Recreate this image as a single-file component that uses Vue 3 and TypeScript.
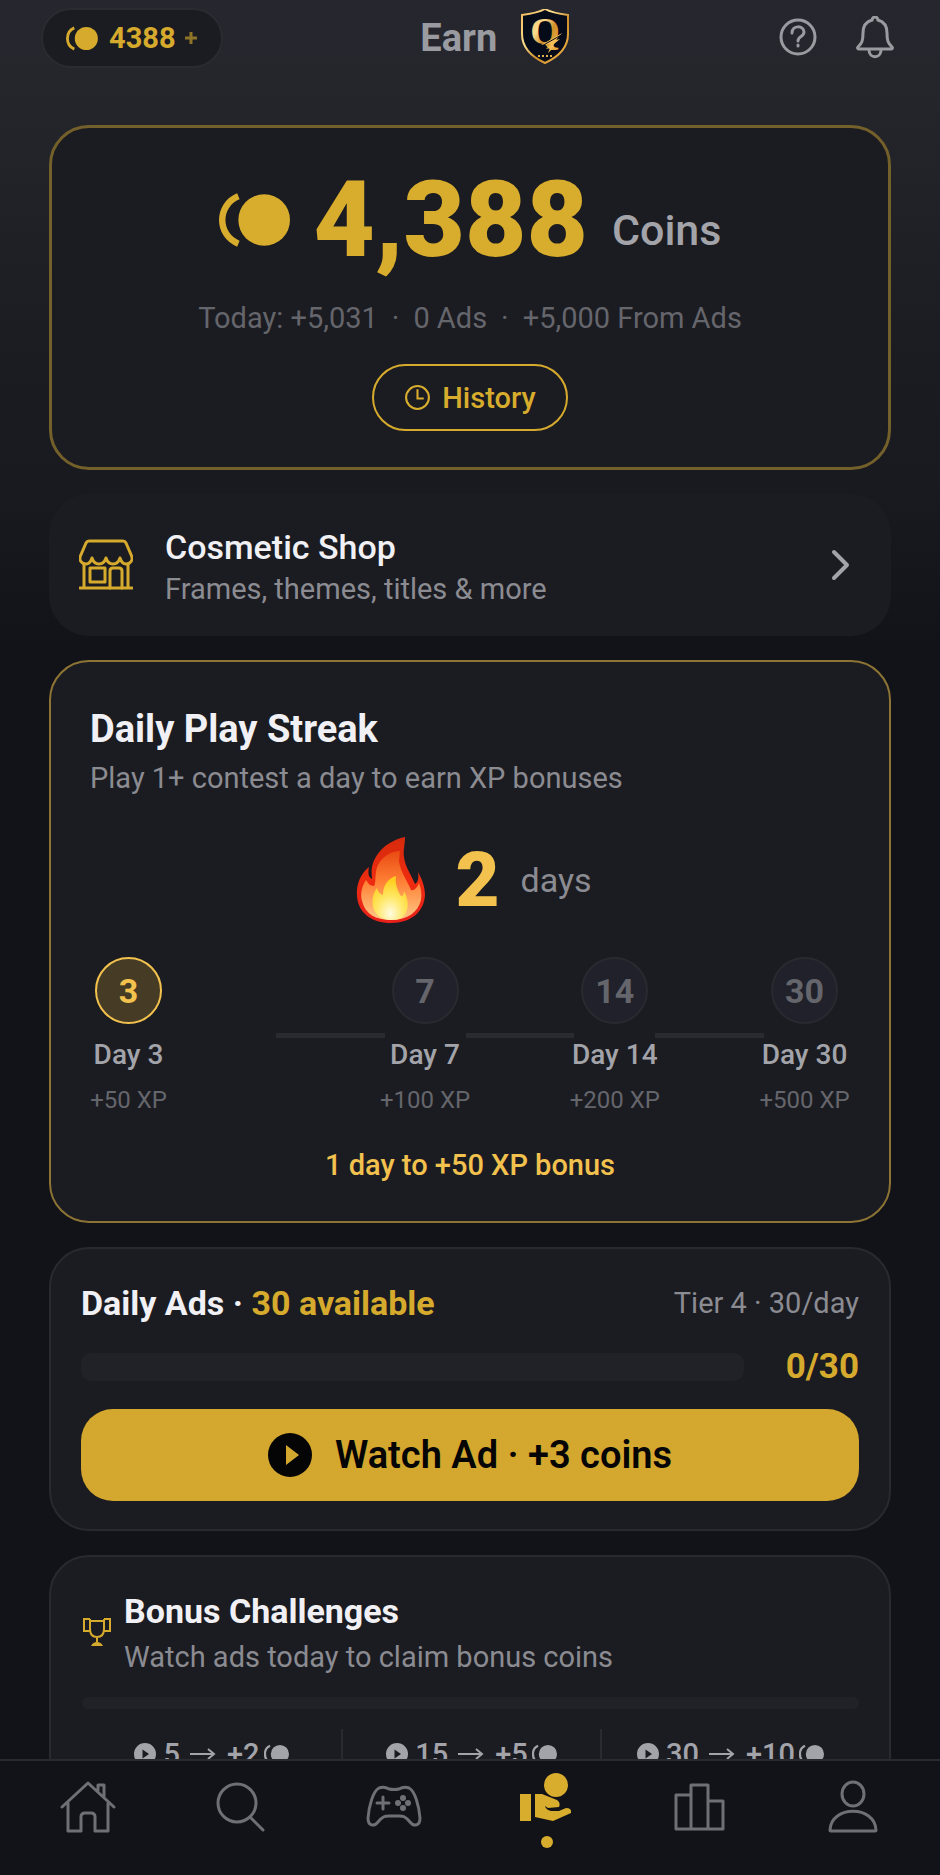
<script setup lang="ts">
interface Step {
  day: number
  xp: number
  active: boolean
}
interface Challenge {
  ads: number
  coins: number
}

const balance = 4388
const adsWatched = 0
const adsLimit = 30
const streak = 2

const steps: Step[] = [
  { day: 3, xp: 50, active: true },
  { day: 7, xp: 100, active: false },
  { day: 14, xp: 200, active: false },
  { day: 30, xp: 500, active: false },
]

const challenges: Challenge[] = [
  { ads: 5, coins: 2 },
  { ads: 15, coins: 5 },
  { ads: 30, coins: 10 },
]
</script>

<template>
  <div class="app">
    <header class="topbar">
      <button class="pill" type="button" aria-label="Coin balance">
        <svg class="pill-coin" viewBox="0 0 66 52" aria-hidden="true">
          <path d="M17 4C-2 12 -2 40 17 48" fill="none" stroke="currentColor" stroke-width="6" />
          <circle cx="42" cy="26" r="24" fill="currentColor" />
        </svg>
        <span>{{ balance }}</span>
        <svg class="pill-plus" viewBox="0 0 14 14" aria-hidden="true">
          <path d="M7 1V13M1 7H13" fill="none" stroke="currentColor" stroke-width="3" />
        </svg>
      </button>

      <div class="brand">
        <h1>Earn</h1>
        <svg class="shield" viewBox="0 2 50 58" aria-hidden="true">
          <defs>
            <linearGradient id="gold" x1="0" y1="0" x2="1" y2="1">
              <stop offset="0" stop-color="#f3b95a" />
              <stop offset="0.35" stop-color="#fbdc8e" />
              <stop offset="0.6" stop-color="#d08f2a" />
              <stop offset="1" stop-color="#f5b94c" />
            </linearGradient>
          </defs>
          <path
            d="M25 2C18 6 10 7 2 8V27C2 41 12 50 25 56C38 50 48 41 48 27V8C40 7 32 6 25 2Z"
            fill="#050b18"
            stroke="url(#gold)"
            stroke-width="2"
          />
          <text x="25" y="37" text-anchor="middle" class="shield-q" fill="url(#gold)">Q</text>
          <path d="M21 38L42 26L36 33L40 32L34 37L33 41L28 46L30 41L26 42L31 37Z" fill="#f4bd58" />
          <path d="M20 40L43 27" stroke="#050b18" stroke-width="1" />
          <path d="M18 49H33" stroke="#e5ac4a" stroke-width="2" stroke-dasharray="2 2" />
        </svg>
      </div>

      <div class="actions">
        <button type="button" aria-label="Help">
          <svg viewBox="0 0 44 44" aria-hidden="true">
            <circle cx="22" cy="21" r="17" />
            <path d="M16 17C16 9 28 9 28 16C28 21 22 20 22 25" />
            <path d="M22 29V30" />
          </svg>
        </button>
        <button type="button" aria-label="Notifications">
          <svg viewBox="0 0 44 44" aria-hidden="true">
            <path
              d="M22 1C20 1 19 3 19 4C12 6 10 11 10 17C10 25 9 27 5 31C4 32 5 33 6 33H38C39 33 40 32 39 31C35 27 34 25 34 17C34 11 32 6 25 4C25 3 24 1 22 1Z"
            />
            <path d="M16 34C16 43 28 43 28 34" />
          </svg>
        </button>
      </div>
    </header>

    <main class="content">
      <section class="card balance">
        <div class="balance-row">
          <svg class="balance-coin" viewBox="0 0 66 52" aria-hidden="true">
            <path d="M18 4C-2 12 -2 40 18 48" fill="none" stroke="currentColor" stroke-width="6" />
            <circle cx="42" cy="26" r="24" fill="currentColor" />
          </svg>
          <strong>{{ balance.toLocaleString('en-US') }}</strong>
          <span class="unit">Coins</span>
        </div>
        <p class="today">
          <span>Today: +5,031</span><span>·</span><span>0 Ads</span><span>·</span><span>+5,000 From Ads</span>
        </p>
        <button class="history" type="button">
          <svg viewBox="0 0 26 26" aria-hidden="true">
            <circle cx="13" cy="13" r="11" />
            <path d="M13 5V14H19" />
          </svg>
          History
        </button>
      </section>

      <a class="card shop" href="#shop">
        <svg class="shop-icon" viewBox="0 0 54 52" aria-hidden="true">
          <path
            d="M10 2H44Q46 2 47 4L53 18V21Q51 25 47 25Q43 25 41 19Q39 25 34 25Q29 25 27 19Q25 25 20 25Q15 25 13 19Q11 25 7 25Q3 25 1 21V18L7 4Q8 2 10 2Z"
          />
          <path d="M5 25V49M49 25V49M1 49H53" />
          <path d="M11 29H26V43H11ZM31 49V32Q31 29 34 29H40Q43 29 43 32V49" />
        </svg>
        <span class="shop-text">
          <span class="shop-title">Cosmetic Shop</span>
          <span class="sub">Frames, themes, titles &amp; more</span>
        </span>
        <svg class="chevron" viewBox="0 0 20 32" aria-hidden="true"><path d="M3 3L16 16L3 29" /></svg>
      </a>

      <section class="card streak">
        <h2>Daily Play Streak</h2>
        <p class="sub">Play 1+ contest a day to earn XP bonuses</p>
        <div class="streak-row">
          <svg class="flame" viewBox="0 0 70 88" aria-hidden="true">
            <defs>
              <linearGradient id="outer" x1="0" y1="0" x2="0" y2="1">
                <stop offset="0" stop-color="#d62a0c" />
                <stop offset="0.5" stop-color="#ee2c10" />
                <stop offset="1" stop-color="#e8201a" />
              </linearGradient>
              <linearGradient id="middle" x1="0" y1="0" x2="0" y2="1">
                <stop offset="0" stop-color="#e94a12" />
                <stop offset="0.45" stop-color="#ff8136" />
                <stop offset="1" stop-color="#ffc987" />
              </linearGradient>
              <radialGradient id="inner" cx="0.5" cy="0.85" r="0.75">
                <stop offset="0" stop-color="#fffbe0" />
                <stop offset="0.5" stop-color="#ffe868" />
                <stop offset="1" stop-color="#ffcf1f" />
              </radialGradient>
            </defs>
            <path
              d="M49 1C31 5 19 17 16 31C15 36 16 40 16 43C12 41 12 36 13 31C5 37 0 48 1 60C2 77 16 87 35 87C55 87 68 76 69 59C69 51 66 43 62 36C63 42 62 46 59 48C55 38 49 31 48 21C47 14 49 9 49 1Z"
              fill="url(#outer)"
            />
            <path
              d="M44 15C35 15 22 22 20 36C19 42 20 47 18 50C14 50 12 47 10 44C6 50 4 58 6 65C9 78 20 84 35 84C52 84 62 76 65 64C66 58 65 52 63 47C61 52 58 55 55 54C52 46 44 35 43 25Z"
              fill="url(#middle)"
            />
            <path
              d="M40 40C31 43 27 50 27 59C24 58 22 56 21 52C16 58 15 68 19 76C23 82 29 84 36 84C43 84 49 81 51 74C53 67 51 61 48 55C48 58 47 60 45 60C41 54 39 47 40 40Z"
              fill="url(#inner)"
            />
          </svg>
          <strong>{{ streak }}</strong>
          <span>days</span>
        </div>

        <ol class="steps">
          <template v-for="(s, i) in steps" :key="s.day">
            <li v-if="i === 1" class="link spacer" aria-hidden="true"></li>
            <li v-if="i > 0" class="link" aria-hidden="true"></li>
            <li class="step" :class="{ active: s.active }">
              <span class="dot">{{ s.day }}</span>
              <span class="day">Day {{ s.day }}</span>
              <span class="xp">+{{ s.xp }} XP</span>
            </li>
          </template>
        </ol>
        <p class="next">1 day to +50 XP bonus</p>
      </section>

      <section class="card ads">
        <div class="ads-head">
          <h2>Daily Ads · <em>{{ adsLimit - adsWatched }} available</em></h2>
          <span>Tier 4 · 30/day</span>
        </div>
        <div class="ads-progress">
          <div class="track" role="progressbar" aria-label="Ads watched" :aria-valuenow="adsWatched" :aria-valuemax="adsLimit">
            <div class="fill" :style="{ width: (adsWatched / adsLimit) * 100 + '%' }"></div>
          </div>
          <strong>{{ adsWatched }}/{{ adsLimit }}</strong>
        </div>
        <button class="watch" type="button">
          <svg viewBox="0 0 44 44" aria-hidden="true">
            <path fill-rule="evenodd" d="M22 0A22 22 0 1 0 22 44A22 22 0 1 0 22 0ZM18 12L31 22L18 32Z" fill="currentColor" />
          </svg>
          Watch Ad · +3 coins
        </button>
      </section>

      <section class="card bonus">
        <div class="bonus-head">
          <svg class="trophy" viewBox="0 0 30 30" aria-hidden="true">
            <path d="M8 4H22V12Q22 20 15 20Q8 20 8 12ZM8 2H2V14H8M22 2H28V14H22M8 2V12M22 2V12M15 20V25" />
            <path d="M9 29Q11 25 15 25Q19 25 21 29Z" fill="currentColor" stroke="none" />
          </svg>
          <div>
            <h2>Bonus Challenges</h2>
            <p class="sub">Watch ads today to claim bonus coins</p>
          </div>
        </div>
        <div class="bonus-track"></div>
        <ul class="challenges">
          <li v-for="c in challenges" :key="c.ads">
            <svg class="mini-play" viewBox="0 0 44 44" aria-hidden="true">
              <path fill-rule="evenodd" d="M22 0A22 22 0 1 0 22 44A22 22 0 1 0 22 0ZM17 13L30 22L17 31Z" fill="currentColor" />
            </svg>
            <span>{{ c.ads }}</span>
            <svg class="arrow" viewBox="0 0 26 14" aria-hidden="true"><path d="M0 7H24M18 2L24 7L18 12" /></svg>
            <span>+{{ c.coins }}</span>
            <svg class="mini-coin" viewBox="0 0 66 52" aria-hidden="true">
              <path d="M16 4C-2 12 -2 40 16 48" fill="none" stroke="currentColor" stroke-width="6" />
              <circle cx="42" cy="26" r="24" fill="currentColor" />
            </svg>
          </li>
        </ul>
      </section>
    </main>

    <nav class="tabs" aria-label="Main">
      <a href="#home" aria-label="Home">
        <svg viewBox="0 0 56 56" aria-hidden="true">
          <path d="M2 28L28 4L54 28M8 24V52H21V38Q21 34 25 34H31Q35 34 35 38V52H48V24M38 12V6H44V18" />
        </svg>
      </a>
      <a href="#search" aria-label="Search">
        <svg viewBox="0 0 56 56" aria-hidden="true"><circle cx="24" cy="24" r="19" /><path d="M37 38L50 51" /></svg>
      </a>
      <a href="#play" aria-label="Play">
        <svg viewBox="0 0 56 56" aria-hidden="true">
          <path
            d="M13 9Q18 7 23 10Q28 11 33 10Q38 7 43 9C49 12 53 27 54 39C54 47 48 48 44 43C39 37 37 37 33 37H23C19 37 17 37 12 43C8 48 2 47 2 39C3 27 7 12 13 9Z"
          />
          <path d="M17 18V30M11 24H23" />
          <g class="solid">
            <circle cx="37" cy="19" r="3" /><circle cx="37" cy="29" r="3" />
            <circle cx="32" cy="24" r="3" /><circle cx="42" cy="24" r="3" />
          </g>
        </svg>
      </a>
      <a href="#earn" aria-label="Earn" aria-current="page" class="current">
        <svg viewBox="0 0 56 56" aria-hidden="true">
          <g class="solid">
            <circle cx="37" cy="6" r="12" />
            <rect x="1" y="15" width="11" height="27" />
            <path d="M16 15H23L38 21Q42 24 40 28L29 29L26 27Q27 31 32 32H40L47 29Q53 29 52 34L34 42L16 38Z" />
          </g>
        </svg>
      </a>
      <a href="#ranks" aria-label="Rankings">
        <svg viewBox="0 0 56 56" aria-hidden="true"><path d="M4 50V16H19V50M19 50V6H36V50M36 22H51V50H4" /></svg>
      </a>
      <a href="#profile" aria-label="Profile">
        <svg viewBox="0 0 56 56" aria-hidden="true">
          <ellipse cx="28" cy="15" rx="11" ry="12" />
          <path d="M5 51C6 26 50 26 51 51Q51 52 50 52H6Q5 52 5 51Z" />
        </svg>
      </a>
    </nav>
  </div>
</template>

<style>
body {
  margin: 0;
  background: #111318;
}
</style>

<style scoped>
.app {
  height: 100vh;
  display: flex;
  flex-direction: column;
  overflow: hidden;
  background: linear-gradient(#26272e 0, #25262c 90px, #1b1c21 360px, #191a1f 490px, #111318 650px);
  color: #f1f1f5;
  font-family: Roboto, "Liberation Sans", sans-serif;
  font-size: 29px;
  line-height: 36px;
}
.app *,
.app *::before {
  box-sizing: border-box;
}
h1, h2, p, ul, ol {
  margin: 0;
  padding: 0;
}
ul, ol {
  list-style: none;
}
button {
  font: inherit;
  color: inherit;
  background: none;
  border: 0;
  padding: 0;
  cursor: pointer;
}
a {
  color: inherit;
  text-decoration: none;
}
svg {
  display: block;
  flex: none;
}

/* top bar */
.topbar {
  display: flex;
  flex: none;
  align-items: center;
  justify-content: space-between;
  padding: 8px 35px 0 41px;
}
.topbar .pill {
  display: flex;
  align-items: center;
  height: 60px;
  padding: 0 23px;
  border: 2px solid #2a2b31;
  border-radius: 30px;
  background: #1a1c21;
  color: #d6aa2d;
  font-weight: 700;
}
.pill-coin {
  width: 32px;
  height: 25px;
  margin-right: 11px;
}
.pill-plus {
  width: 14px;
  height: 14px;
  margin-left: 8px;
  color: #8d7428;
}
.brand {
  display: flex;
  align-items: center;
  gap: 23px;
}
.brand h1 {
  font-size: 38px;
  line-height: 48px;
  font-weight: 700;
  color: #9a9aa1;
}
.shield {
  width: 50px;
  height: 58px;
}
.shield-q {
  font: 700 38px "Liberation Serif", serif;
}
.actions {
  display: flex;
  gap: 17px;
}
.actions button {
  width: 60px;
  height: 60px;
  display: grid;
  place-items: center;
  color: #9a9aa1;
}
.actions svg {
  width: 44px;
  height: 44px;
  fill: none;
  stroke: currentColor;
  stroke-width: 3;
  stroke-linecap: round;
}

/* cards */
.content {
  flex: 1;
  min-height: 0;
  overflow-y: auto;
  scrollbar-width: none;
  display: flex;
  flex-direction: column;
  gap: 24px;
  padding: 57px 49px 24px 49px;
}
.card {
  flex: none;
  border-radius: 40px;
  background: #1b1c21;
}
h2 {
  font-size: 34px;
  line-height: 44px;
  font-weight: 700;
}
.sub {
  color: #8b8b92;
}

.balance {
  display: flex;
  flex-direction: column;
  align-items: center;
  border: 3px solid #73602a;
  padding: 42px 24px 36px;
  color: #d8ac2d;
}
.balance-row {
  display: flex;
  align-items: flex-end;
  height: 100px;
}
.balance-coin {
  width: 71px;
  height: 56px;
  align-self: center;
  margin-right: 24px;
}
.balance-row strong {
  font-size: 106px;
  line-height: 100px;
  font-weight: 900;
}
.unit {
  margin-left: 24px;
  font-size: 43px;
  line-height: 80px;
  font-weight: 500;
  color: #a3a3aa;
}
.today {
  display: flex;
  gap: 14px;
  margin-top: 30px;
  color: #65656c;
}
.history {
  display: flex;
  align-items: center;
  gap: 11px;
  height: 67px;
  margin-top: 28px;
  padding: 0 30px;
  border: 2px solid #d6aa2d;
  border-radius: 34px;
  font-weight: 500;
}
.history svg {
  width: 27px;
  height: 27px;
  fill: none;
  stroke: currentColor;
  stroke-width: 2;
}

.shop {
  display: flex;
  align-items: center;
  padding: 27px 40px 27px 30px;
}
.shop-icon {
  width: 54px;
  height: 52px;
  margin-right: 32px;
  fill: none;
  stroke: #d6aa2d;
  stroke-width: 3;
  stroke-linecap: round;
  stroke-linejoin: round;
}
.shop-text {
  flex: 1;
  display: flex;
  flex-direction: column;
  padding-top: 4px;
}
.shop-title {
  font-size: 34px;
  line-height: 44px;
  font-weight: 500;
}
.shop-text .sub {
  line-height: 40px;
}
.chevron {
  width: 20px;
  height: 32px;
  fill: none;
  stroke: #a3a3aa;
  stroke-width: 4;
  stroke-linecap: round;
  stroke-linejoin: round;
}

.streak {
  border: 2px solid #8d7434;
  padding: 45px 39px 38px;
}
.streak h2 {
  font-size: 38px;
}
.streak .sub {
  margin-top: 9px;
}
.streak-row {
  display: flex;
  justify-content: center;
  align-items: center;
  height: 88px;
  margin-top: 40px;
  padding-left: 8px;
}
.flame {
  width: 70px;
  height: 88px;
}
.streak-row strong {
  margin: 0 21px 0 29px;
  font-size: 76px;
  line-height: 88px;
  font-weight: 900;
  color: #f2c14e;
}
.streak-row span {
  font-size: 34px;
  color: #8b8b92;
}
.steps {
  display: flex;
  align-items: flex-start;
  margin-top: 33px;
  padding-right: 5px;
}
.link {
  flex: 1;
  height: 5px;
  margin-top: 76px;
  background: #2a2b31;
}
.link.spacer {
  background: none;
}
.step {
  width: 81px;
  display: flex;
  flex-direction: column;
  align-items: center;
  white-space: nowrap;
}
.step:first-child {
  width: 77px;
}
.dot {
  width: 67px;
  height: 67px;
  display: grid;
  place-items: center;
  border: 2px solid #292a30;
  border-radius: 50%;
  background: #20212a;
  font-size: 34px;
  font-weight: 700;
  color: #65656c;
}
.active .dot {
  border-color: #f2c14e;
  background: #463c25;
  color: #f2c14e;
}
.day {
  margin-top: 15px;
  font-size: 28px;
  line-height: 32px;
  font-weight: 500;
  color: #a3a3aa;
}
.xp {
  margin-top: 15px;
  font-size: 24px;
  line-height: 28px;
  color: #65656c;
}
.next {
  margin-top: 33px;
  text-align: center;
  font-weight: 500;
  color: #f2c14e;
}

.ads {
  border: 2px solid #292a2f;
  padding: 32px 30px 28px;
}
.ads-head {
  display: flex;
  align-items: center;
  justify-content: space-between;
  color: #8b8b92;
}
.ads-head h2 {
  color: #f1f1f5;
}
.ads-head em {
  font-style: normal;
  color: #d6aa2d;
}
.ads-progress {
  display: flex;
  align-items: center;
  justify-content: space-between;
  gap: 42px;
  margin-top: 22px;
  line-height: 40px;
}
.track {
  flex: 1;
  height: 28px;
  border-radius: 10px;
  background: #212228;
  overflow: hidden;
}
.fill {
  height: 100%;
  background: #d6aa2d;
}
.ads-progress strong {
  font-size: 35px;
  color: #d6aa2d;
}
.ads .watch {
  display: flex;
  align-items: center;
  justify-content: center;
  gap: 23px;
  width: 100%;
  height: 92px;
  margin-top: 22px;
  border-radius: 32px;
  font-size: 38px;
  font-weight: 600;
  background: #d4a72e;
  color: #050505;
}
.watch svg {
  width: 44px;
  height: 44px;
}

.bonus {
  border: 2px solid #292a2f;
  padding: 32px 30px 30px 31px;
}
.bonus-head {
  display: flex;
  align-items: center;
  gap: 12px;
}
.trophy {
  width: 30px;
  height: 30px;
  margin-bottom: 6px;
  fill: none;
  stroke: currentColor;
  stroke-width: 2;
  color: #d6aa2d;
}
.bonus-head .sub {
  line-height: 48px;
}
.bonus-track {
  height: 12px;
  margin-top: 16px;
  border-radius: 6px;
  background: #212228;
}
.challenges {
  display: grid;
  grid-template-columns: repeat(3, 1fr);
  margin-top: 20px;
}
.challenges li {
  display: flex;
  align-items: center;
  justify-content: center;
  height: 50px;
  font-weight: 500;
  color: #a3a3aa;
}
.challenges li + li {
  border-left: 2px solid #2a2b31;
}
.mini-play {
  width: 22px;
  height: 22px;
  margin-right: 7px;
}
.arrow {
  width: 26px;
  height: 14px;
  margin: 0 11px 0 10px;
  fill: none;
  stroke: currentColor;
  stroke-width: 2;
}
.mini-coin {
  width: 25px;
  height: 20px;
  margin-left: 4px;
}

/* bottom tabs */
.tabs {
  flex: none;
  display: grid;
  grid-template-columns: repeat(6, 1fr);
  height: 116px;
  padding: 18px 11px 0;
  border-top: 2px solid #2a2b31;
  background: #121318;
}
.tabs a {
  position: relative;
  display: flex;
  justify-content: center;
  color: #6f6f76;
}
.tabs svg {
  width: 56px;
  height: 56px;
  overflow: visible;
  fill: none;
  stroke: currentColor;
  stroke-width: 3;
  stroke-linecap: round;
  stroke-linejoin: round;
}
.tabs .solid {
  fill: currentColor;
  stroke: none;
}
.tabs a.current {
  color: #d8ac2d;
}
.current::before {
  content: "";
  position: absolute;
  top: 57px;
  left: 50%;
  width: 12px;
  height: 12px;
  margin-left: -6px;
  border-radius: 50%;
  background: currentColor;
}
</style>
